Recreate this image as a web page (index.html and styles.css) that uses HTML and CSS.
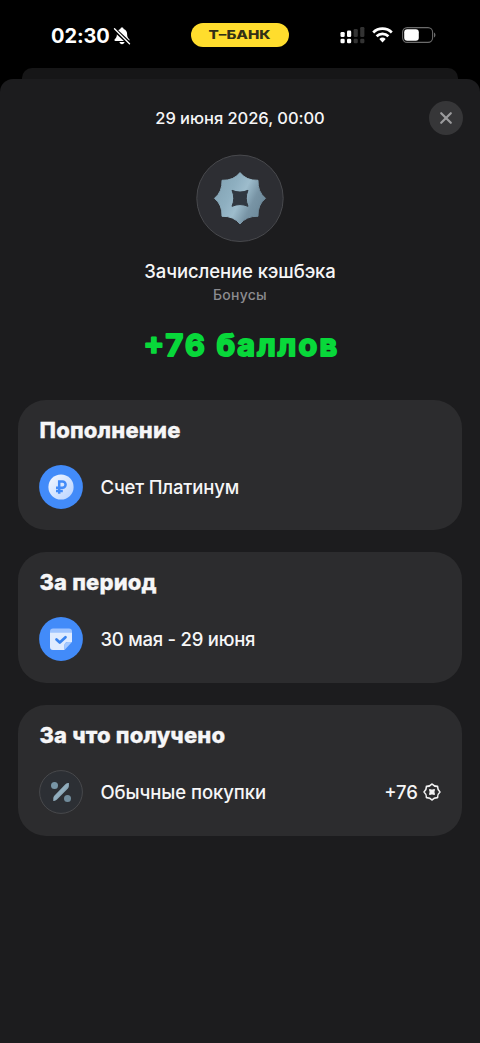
FILE: index.html
```html
<!DOCTYPE html>
<html lang="ru">
<head>
<meta charset="utf-8">
<title>Зачисление кэшбэка</title>
<link rel="stylesheet" href="styles.css">
</head>
<body>
<div class="phone">
  <header class="status">
    <div class="clock">
      <span class="time">02:30</span>
      <svg class="bell" width="18" height="18" viewBox="0 0 18 18">
        <path fill="#fff" d="M9 .6c-.9 0-1.500.5-1.600 1.300C5 2.600 3.900 4.500 3.900 7c0 2.800-.7 3.800-1.700 4.800-.6.600-.8.900-.8 1.300 0 .6.400.9 1.100.9h13c.7 0 1.100-.3 1.100-.9 0-.4-.2-.7-.8-1.300-1-1-1.700-2-1.700-4.800 0-2.500-1.100-4.400-3.500-5.100C10.500 1.100 9.900.6 9 .6zM6.500 15h5c-.2 1.300-1.200 2.200-2.500 2.200S6.700 16.300 6.500 15z"/>
        <path stroke="#000" stroke-width="4" d="M0 1l17.500 16.500"/>
        <path stroke="#fff" stroke-width="1.400" stroke-linecap="round" d="M1.500 1.700l15 15"/>
      </svg>
    </div>
    <div class="pill"><svg width="98" height="24" viewBox="0 0 98 24"><text x="17.500" y="16.200" textLength="62" lengthAdjust="spacingAndGlyphs">Т–БАНК</text></svg></div>
    <div class="indicators">
      <svg width="25" height="17" viewBox="0 0 25 17">
        <g fill="#fff"><rect x=".5" y="5" width="4.200" height="5" rx="1.300"/><rect x="7" y="3.600" width="4.200" height="6.400" rx="1.300"/><rect x=".5" y="11.800" width="4.200" height="4.400" rx="1.300"/><rect x="7" y="11.800" width="4.200" height="4.400" rx="1.300"/></g>
        <g fill="#333"><rect x="13.600" y="2" width="4.200" height="8" rx="1.300"/><rect x="20.200" y="0" width="4.200" height="10" rx="1.300"/><rect x="13.600" y="11.800" width="4.200" height="4.400" rx="1.300"/><rect x="20.200" y="11.800" width="4.200" height="4.400" rx="1.300"/></g>
      </svg>
      <svg class="wifi" width="21" height="16" viewBox="0 0 21 16">
        <g fill="none" stroke="#fff" stroke-width="2.700"><path d="M1.200 5.500a13.300 13.300 0 0 1 18.600 0"/><path d="M4.600 9.200a8.400 8.400 0 0 1 11.800 0"/></g>
        <path fill="#fff" d="M7.300 12.100a4.700 4.700 0 0 1 6.400 0L10.500 15.400z"/>
      </svg>
      <svg class="battery" width="34" height="16" viewBox="0 0 34 16">
        <rect x=".6" y=".6" width="30" height="14.800" rx="4.600" fill="none" stroke="#6b6b6b" stroke-width="1.100"/>
        <rect x="2.200" y="2.300" width="14.600" height="11.400" rx="3" fill="#fff"/>
        <path fill="#6b6b6b" d="M32 5.500c1.900.7 1.900 4.300 0 5z"/>
      </svg>
    </div>
  </header>
  <div class="back-sheet"></div>
  <main class="sheet">
    <div class="topbar">
      <span class="date">29 июня 2026, 00:00</span>
      <button class="close" aria-label="Закрыть"><svg width="14" height="14" viewBox="0 0 14 14"><path d="M2.200 2.200l9.600 9.600M11.800 2.200l-9.600 9.600" stroke="#9b9b9d" stroke-width="2.200" stroke-linecap="round"/></svg></button>
    </div>
    <svg class="hero" width="88" height="88" viewBox="0 0 88 88">
      <defs><linearGradient id="steel" gradientUnits="userSpaceOnUse" x1="20" y1="32" x2="68" y2="56"><stop offset="0" stop-color="#84a4b5"/><stop offset=".3" stop-color="#8eafc0"/><stop offset=".52" stop-color="#9dbccc"/><stop offset=".75" stop-color="#7894a5"/><stop offset="1" stop-color="#6c8899"/></linearGradient></defs>
      <circle cx="44" cy="44.300" r="43.200" fill="#2d2e33" stroke="#48494d"/>
      <path fill="url(#steel)" stroke="url(#steel)" stroke-width="1" stroke-linejoin="round" d="M44 18.600Q50.500 26.800 62 26.300Q61.500 37.800 69.500 44.300Q61.500 50.800 62 62.300Q50.500 61.800 44 70Q37.500 61.800 26 62.300Q26.500 50.800 18.500 44.300Q26.500 37.800 26 26.300Q37.500 26.800 44 18.600z"/>
      <path fill="#303740" stroke="#303740" stroke-linejoin="round" d="M36 36.300Q44 39.800 52 36.300Q48.500 44.300 52 52.300Q44 48.800 36 52.300Q39.500 44.300 36 36.300z"/>
    </svg>
    <h1 class="title">Зачисление кэшбэка</h1>
    <p class="subtitle">Бонусы</p>
    <svg class="amount" width="240" height="40" viewBox="0 0 240 40"><text x="23.500" y="30.700" textLength="193.500">+76 баллов</text></svg>

    <section class="card">
      <h2 class="heading">Пополнение</h2>
      <div class="row">
        <svg class="icon" width="44" height="44" viewBox="0 0 44 44">
          <defs><linearGradient id="coin" x1="0" y1="0" x2="1" y2="1"><stop offset="0" stop-color="#f4f8ff"/><stop offset="1" stop-color="#b7d2ff"/></linearGradient></defs>
          <circle cx="22" cy="22" r="21.900" fill="#428bf9"/><circle cx="22" cy="22" r="12.600" fill="url(#coin)"/>
          <path fill="none" stroke="#428bf9" stroke-width="2.500" d="M20.200 28.800V16.500h3.300a3.100 3.100 0 0 1 0 6.200H17M17 25.900h6.800"/>
        </svg>
        <span class="label account">Счет Платинум</span>
      </div>
    </section>

    <section class="card">
      <h2 class="heading period">За период</h2>
      <div class="row">
        <svg class="icon" width="44" height="44" viewBox="0 0 44 44">
          <circle cx="22" cy="22" r="21.900" fill="#428bf9"/>
          <path fill="#9fc4ff" d="M11 16v-1.500a3 3 0 0 1 3-3h16a3 3 0 0 1 3 3V16z"/>
          <path fill="#dfebff" d="M11 15.800h22V25h-4a3.500 3.500 0 0 0-3.500 3.500V33H14a3 3 0 0 1-3-3z"/>
          <path fill="#a4c8ff" d="M33 25L25.500 33v-4.500a3.500 3.500 0 0 1 3.500-3.500z"/>
          <path fill="none" stroke="#3983ef" stroke-width="2.700" stroke-linecap="round" stroke-linejoin="round" d="M17.500 22.500l3.300 3.100 5.700-5.400"/>
        </svg>
        <span class="label dates">30 мая - 29 июня</span>
      </div>
    </section>

    <section class="card">
      <h2 class="heading earned">За что получено</h2>
      <div class="row">
        <svg class="icon" width="44" height="44" viewBox="0 0 44 44">
          <defs><linearGradient id="slash" x1="0" y1="0" x2="1" y2="1"><stop offset="0" stop-color="#7f9baa"/><stop offset=".5" stop-color="#92afbf"/><stop offset="1" stop-color="#647d8c"/></linearGradient></defs>
          <circle cx="22" cy="22" r="21.400" fill="#2c2f34" stroke="#48494c"/>
          <circle cx="15.500" cy="15.500" r="3.500" fill="#7895a5"/><circle cx="28.500" cy="28.500" r="3.500" fill="#708b9b"/>
          <path fill="url(#slash)" d="M14.300 31v-2.800q0-1.500 1-2.500L26.400 14.200q1.500-1.500 3.500-1.300v3.200q0 1.400-1 2.400L18 29.600q-1.700 1.700-3.700 1.400z"/>
        </svg>
        <span class="label purchases">Обычные покупки</span>
        <span class="points">+76</span>
        <svg class="bonus" width="18" height="18" viewBox="0 0 18 18"><path fill="none" stroke="#f2f2f3" stroke-width="1.600" stroke-linejoin="round" d="M9 1Q11 3.500 14.600 3.400Q14.500 7 17 9Q14.500 11 14.600 14.600Q11 14.500 9 17Q7 14.500 3.400 14.600Q3.500 11 1 9Q3.500 7 3.400 3.400Q7 3.500 9 1z"/><path fill="#f2f2f3" stroke="#f2f2f3" stroke-linejoin="round" d="M6.500 6.500Q9 7.700 11.500 6.500Q10.300 9 11.500 11.500Q9 10.300 6.500 11.500Q7.700 9 6.500 6.500z"/></svg>
      </div>
    </section>
  </main>
</div>
</body>
</html>
```
FILE: styles.css
```css
* { box-sizing: border-box; }
body { margin: 0; background: #000; color: #f6f6f7; font-family: Inter, "Liberation Sans", sans-serif; }
.phone { display: flex; flex-direction: column; height: 1043px; overflow: hidden; }
.status { display: grid; grid-template-columns: 191px 98px 1fr; height: 68px; padding-top: 22px; flex: none; }
.clock { display: flex; align-items: center; height: 26px; padding: 1px 0 0 51px; }
.time { width: 62px; font-size: 20px; font-weight: 700; line-height: 24px; letter-spacing: -.1px; color: #fff; white-space: nowrap; }
.bell { flex: none; }
.pill { height: 24px; margin-top: 1px; border-radius: 12px; background: #ffdd2d; }
.pill svg { display: block; }
.pill text { fill: #333016; font-size: 12px; font-weight: 800; }
.indicators { display: flex; align-items: center; height: 26px; padding-left: 51px; }
.wifi { margin: 0 0 0 7px; }
.battery { margin-left: 9px; }
.back-sheet { flex: none; height: 11px; margin: 0 22px; border-radius: 10px 10px 0 0; background: #161617; }
.sheet { display: flex; flex: 1; flex-direction: column; padding: 22px 18px 0; border-radius: 13px 13px 0 0; background: #1c1c1e; }
.topbar { display: grid; grid-template-columns: 1fr auto 1fr; align-items: center; height: 34px; margin-right: -1px; }
.date { grid-column: 2; margin-right: 1px; font-size: 16.500px; font-weight: 500; letter-spacing: -.04px; white-space: nowrap; }
.close { display: flex; align-items: center; justify-content: center; justify-self: end; width: 34px; height: 34px; padding: 0; border: 0; border-radius: 50%; background: #363638; }
.hero { align-self: center; margin-top: 19px; flex: none; }
.title { margin: 17px 0 0; font-size: 18.500px; font-weight: 500; line-height: 24px; letter-spacing: -.1px; text-align: center; }
.subtitle { margin: 3px 0 0; color: #8b8b8f; font-size: 14px; font-weight: 500; line-height: 18px; letter-spacing: .25px; text-align: center; }
.amount { align-self: center; flex: none; margin: 21px 0 0; }
.amount text { fill: #08d83a; stroke: #08d83a; stroke-width: 2px; stroke-linejoin: round; font-size: 30.500px; font-weight: 700; }
.card { flex: none; height: 130.500px; margin-bottom: 22.300px; padding: 16px 21px 0; border-radius: 28px; background: #2c2c2e; }
.amount + .card { margin-top: 34.700px; }
.heading { margin: 0 0 0 .5px; font-size: 22px; font-weight: 800; line-height: 28px; letter-spacing: .17px; -webkit-text-stroke: .3px #f6f6f7; white-space: nowrap; }
.row { display: flex; align-items: center; height: 44px; margin-top: 21px; }
.label { flex: 1; margin-left: 17.500px; font-size: 18.500px; font-weight: 500; white-space: nowrap; }
.account { letter-spacing: -.17px; }
.dates { letter-spacing: -.25px; }
.purchases { letter-spacing: -.08px; }
.points { font-size: 18.500px; font-weight: 500; margin-right: 5px; }
```
